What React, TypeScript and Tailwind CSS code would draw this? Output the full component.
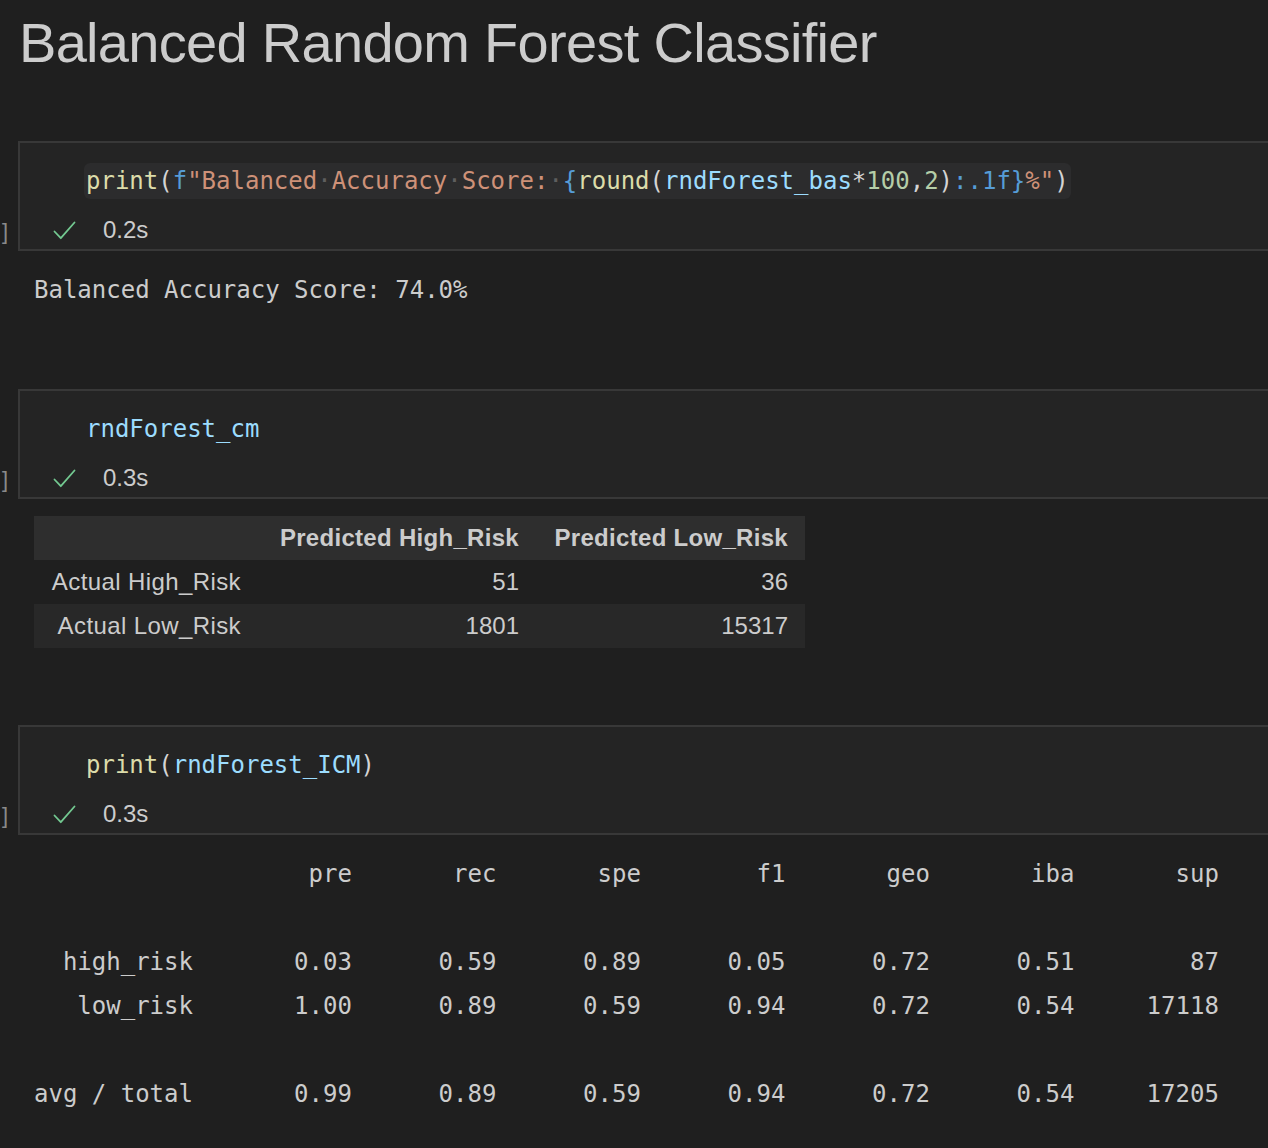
import React from 'react';

const mono = "font-['DejaVu_Sans_Mono','Liberation_Mono',monospace]";
const sans = "font-['Liberation_Sans','Arial',sans-serif]";

// VS Code "render whitespace" dot
const Sp = () => <span className="text-[#5e5e5e]">·</span>;

function Check() {
  return (
    <svg width="23" height="19" viewBox="0 0 23 19" fill="none">
      <path d="M1.5 10.5 L7.8 17.2 L21.5 1.5" stroke="#73c991" strokeWidth="1.8" strokeLinecap="round" strokeLinejoin="round" />
    </svg>
  );
}

function Cell({ time, children, highlight = false }: { time: string; children: React.ReactNode; highlight?: boolean }) {
  return (
    <div className="relative mr-[-40px] border-2 border-[#383838] bg-[#242424]">
      {/* tail of the execution count, pushed to the window edge */}
      <span className={`absolute right-full top-[71px] mr-[12px] text-[22px] leading-[36px] text-[#8a8a8a] ${sans}`}>]</span>
      <div className="pt-[20px] pl-[64px]">
        <div className={`inline-block h-[36px] px-[2px] rounded-md ${highlight ? 'bg-[#2c2c2d]' : ''}`}>
          <span className={`text-[24px] leading-[36px] whitespace-pre text-[#d4d4d4] ${mono}`}>{children}</span>
        </div>
      </div>
      <div className="mt-[13px] mb-[1px] flex h-[36px] items-center pl-[33px]">
        <Check />
        <span className={`ml-[27px] text-[24px] text-[#cccccc] ${sans}`}>{time}</span>
      </div>
    </div>
  );
}

const report = [
  '                   pre       rec       spe        f1       geo       iba       sup',
  '',
  '  high_risk       0.03      0.59      0.89      0.05      0.72      0.51        87',
  '   low_risk       1.00      0.89      0.59      0.94      0.72      0.54     17118',
  '',
  'avg / total       0.99      0.89      0.59      0.94      0.72      0.54     17205',
];

export default function App() {
  return (
    <div className="min-h-screen w-full overflow-hidden bg-[#1f1f1f] pl-[18px] pb-[40px]">
      <h1 className={`ml-[1px] pt-[15px] text-[56px] leading-[56px] font-normal tracking-[-0.7px] text-[#cccccc] ${sans}`}>
        Balanced Random Forest Classifier
      </h1>

      {/* cell 1 */}
      <div className="mt-[70px]">
        <Cell time="0.2s" highlight>
          <span className="text-[#dcdcaa]">print</span>(
          <span className="text-[#569cd6]">f</span>
          <span className="text-[#ce9178]">"Balanced<Sp />Accuracy<Sp />Score:<Sp /></span>
          <span className="text-[#569cd6]">{'{'}</span>
          <span className="text-[#dcdcaa]">round</span>(
          <span className="text-[#9cdcfe]">rndForest_bas</span>*
          <span className="text-[#b5cea8]">100</span>,
          <span className="text-[#b5cea8]">2</span>)
          <span className="text-[#569cd6]">:.1f{'}'}</span>
          <span className="text-[#ce9178]">%"</span>)
        </Cell>
      </div>
      <div className={`pt-[17px] pb-[77px] pl-[16px] text-[24px] leading-[44px] whitespace-pre text-[#cccccc] ${mono}`}>
        Balanced Accuracy Score: 74.0%
      </div>

      {/* cell 2 */}
      <Cell time="0.3s">
        <span className="text-[#9cdcfe]">rndForest_cm</span>
      </Cell>
      <div className="pt-[17px] pb-[77px] pl-[16px]">
        <table className={`table-fixed border-collapse whitespace-nowrap text-[24px] text-[#cccccc] ${sans}`}>
          <thead>
            <tr className="h-[44px] bg-[#2e2e2e] font-bold tracking-[0.3px]">
              <th className="w-[224px] px-[17px]"></th>
              <th className="w-[278px] px-[17px] text-right">Predicted High_Risk</th>
              <th className="w-[269px] px-[17px] text-right">Predicted Low_Risk</th>
            </tr>
          </thead>
          <tbody>
            <tr className="h-[44px]">
              <td className="px-[17px] text-right tracking-[0.4px]">Actual High_Risk</td>
              <td className="px-[17px] text-right">51</td>
              <td className="px-[17px] text-right">36</td>
            </tr>
            <tr className="h-[44px] bg-[#282828]">
              <td className="px-[17px] text-right tracking-[0.4px]">Actual Low_Risk</td>
              <td className="px-[17px] text-right">1801</td>
              <td className="px-[17px] text-right">15317</td>
            </tr>
          </tbody>
        </table>
      </div>

      {/* cell 3 */}
      <Cell time="0.3s">
        <span className="text-[#dcdcaa]">print</span>(
        <span className="text-[#9cdcfe]">rndForest_ICM</span>)
      </Cell>
      <pre className={`pt-[17px] pl-[16px] text-[24px] leading-[44px] text-[#cccccc] ${mono}`}>
        {report.join('\n')}
      </pre>
    </div>
  );
}
